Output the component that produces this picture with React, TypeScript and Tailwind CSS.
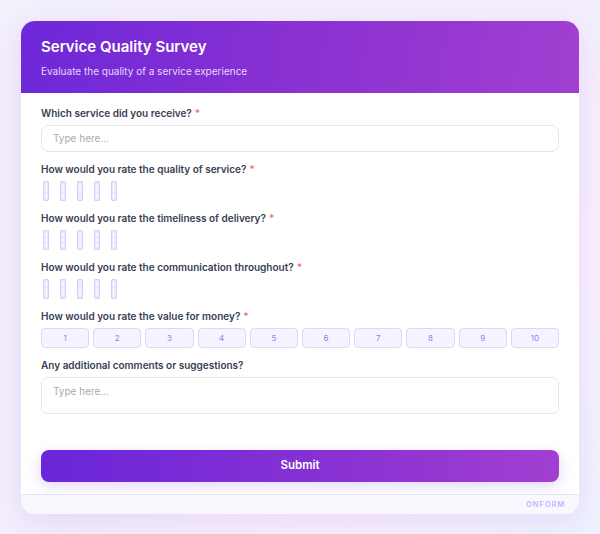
import React from "react";

const Star = () => <span className="ml-[3px] text-[#f87171]">*</span>;

function Label({ children, req }: { children: React.ReactNode; req?: boolean }) {
  return (
    <div className="text-[10px] leading-[14px] font-semibold text-[#374151]">
      {children}
      {req && <Star />}
    </div>
  );
}

function Tiny() {
  return (
    <div className="flex gap-[11px] pl-[2px] h-[20px] items-stretch">
      {[0, 1, 2, 3, 4].map((i) => (
        <div key={i} className="w-[6px] rounded-[1px] border border-[#d9d0fd] bg-[#ebe6fe] flex flex-col items-center justify-center gap-[1px] py-[2px]">
          <div className="w-[2px] h-[4px] bg-[#f7f5ff]" />
          <div className="w-[2px] h-[4px] bg-[#f7f5ff]" />
          <div className="w-[2px] h-[4px] bg-[#f7f5ff]" />
        </div>
      ))}
    </div>
  );
}

export default function App() {
  return (
    <div
      className="w-[600px] h-[534px] p-[21px] bg-[linear-gradient(135deg,#f3effb_0%,#f4eefc_55%,#f9effb_75%,#eef2fe_100%)]"
      style={{ fontFamily: "Inter, 'Noto Sans', sans-serif" }}
    >
      <div className="w-[558px] rounded-[14px] bg-white overflow-hidden shadow-[0_8px_30px_rgba(124,58,237,0.12)] flex flex-col">
        <div className="h-[72px] px-[20px] pt-[16px] bg-[linear-gradient(100deg,#6d28d9_0%,#8a31d2_50%,#a13fd0_100%)]">
          <div className="text-[15px] leading-[20px] font-semibold text-white">Service Quality Survey</div>
          <div className="mt-[8px] text-[10px] leading-[12px] text-[#e6d8f8]">Evaluate the quality of a service experience</div>
        </div>
        <div className="px-[20px] pt-[13px] pb-[12px] flex flex-col gap-[10px]">
          <div className="flex flex-col gap-[5px]">
            <Label req>Which service did you receive?</Label>
            <div className="h-[27px] rounded-[7px] border border-[#e5e7eb] px-[11px] flex items-center text-[10px] text-[#a8aab3]">Type here...</div>
          </div>
          <div className="flex flex-col gap-[5px]">
            <Label req>How would you rate the quality of service?</Label>
            <Tiny />
          </div>
          <div className="flex flex-col gap-[5px]">
            <Label req>How would you rate the timeliness of delivery?</Label>
            <Tiny />
          </div>
          <div className="flex flex-col gap-[5px]">
            <Label req>How would you rate the communication throughout?</Label>
            <Tiny />
          </div>
          <div className="flex flex-col gap-[5px]">
            <Label req>How would you rate the value for money?</Label>
            <div className="grid grid-cols-10 gap-[4px]">
              {[1, 2, 3, 4, 5, 6, 7, 8, 9, 10].map((n) => (
                <div key={n} className="h-[20px] rounded-[4px] border border-[#ddd6fe] bg-[#f5f3ff] flex items-center justify-center text-[8px] text-[#9f7aea]">
                  {n}
                </div>
              ))}
            </div>
          </div>
          <div className="flex flex-col gap-[5px]">
            <Label>Any additional comments or suggestions?</Label>
            <div className="h-[37px] rounded-[7px] border border-[#e5e7eb] px-[11px] pt-[7px] text-[10px] leading-[12px] text-[#a8aab3]">Type here...</div>
          </div>
          <div className="mt-[26px] h-[32px] rounded-[8px] bg-[linear-gradient(90deg,#6a26d9_0%,#8a32d3_60%,#a23fd1_100%)] shadow-[0_4px_14px_rgba(139,92,246,0.25)] flex items-center justify-center text-[11.5px] font-semibold text-white">
            Submit
          </div>
        </div>
        <div className="h-[20px] border-t border-[#e5e3ee] bg-[#faf8ff] flex items-center justify-end pr-[14px] text-[7.5px] font-semibold tracking-[0.12em] text-[#c4b5fd]">
          ONFORM
        </div>
      </div>
    </div>
  );
}
